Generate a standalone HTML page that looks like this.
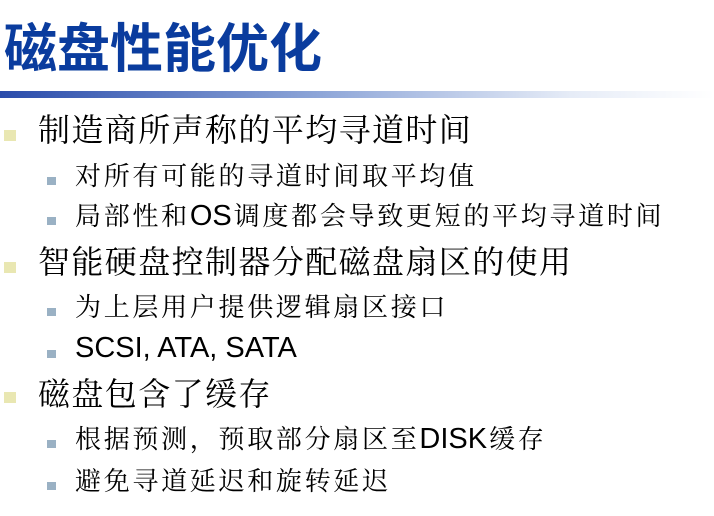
<!DOCTYPE html>
<html><head><meta charset="utf-8"><style>
body{margin:0;width:714px;height:516px;background:#fff;position:relative;overflow:hidden;font-family:"Liberation Sans","Noto Serif CJK SC","Noto Sans CJK SC",sans-serif;}
.t{position:absolute;left:4px;top:20px;font-size:53px;font-weight:bold;color:#0a3c9e;line-height:60px;font-family:"Liberation Sans","Noto Sans CJK SC",sans-serif;}
.bar{position:absolute;left:0;top:91px;width:714px;height:7px;background:linear-gradient(to right,#2a4cab,#8ea6d8 45%,#e6ecf7 80%,#fff);}
.l{position:absolute;white-space:nowrap;color:#000;}
.l1{left:38px;font-size:32px;letter-spacing:1.4px;line-height:40px;}
.l2{left:75px;font-size:26px;letter-spacing:2.7px;line-height:34px;}
.e{letter-spacing:0;margin-right:2px;font-size:29px;}
.b1{position:absolute;left:4px;width:12px;height:11px;background:#e9e7b2;}
.b2{position:absolute;left:47px;width:9px;height:8px;background:#9ab1c4;}
</style></head><body>
<div class="t">磁盘性能优化</div>
<div class="bar"></div>

<div class="b1" style="top:130px"></div><div class="l l1" style="top:110px">制造商所声称的平均寻道时间</div>
<div class="b2" style="top:177px"></div><div class="l l2" style="top:159px">对所有可能的寻道时间取平均值</div>
<div class="b2" style="top:217px"></div><div class="l l2" style="top:199px">局部性和<span class="e">OS</span>调度都会导致更短的平均寻道时间</div>
<div class="b1" style="top:262px"></div><div class="l l1" style="top:242px">智能硬盘控制器分配磁盘扇区的使用</div>
<div class="b2" style="top:308px"></div><div class="l l2" style="top:290px">为上层用户提供逻辑扇区接口</div>
<div class="b2" style="top:350px"></div><div class="l l2" style="top:331px;letter-spacing:0;font-size:29px">SCSI, ATA, SATA</div>
<div class="b1" style="top:392px"></div><div class="l l1" style="top:374px">磁盘包含了缓存</div>
<div class="b2" style="top:440px"></div><div class="l l2" style="top:422px">根据预测，预取部分扇区至<span class="e">DISK</span>缓存</div>
<div class="b2" style="top:482px"></div><div class="l l2" style="top:464px">避免寻道延迟和旋转延迟</div>
</body></html>
